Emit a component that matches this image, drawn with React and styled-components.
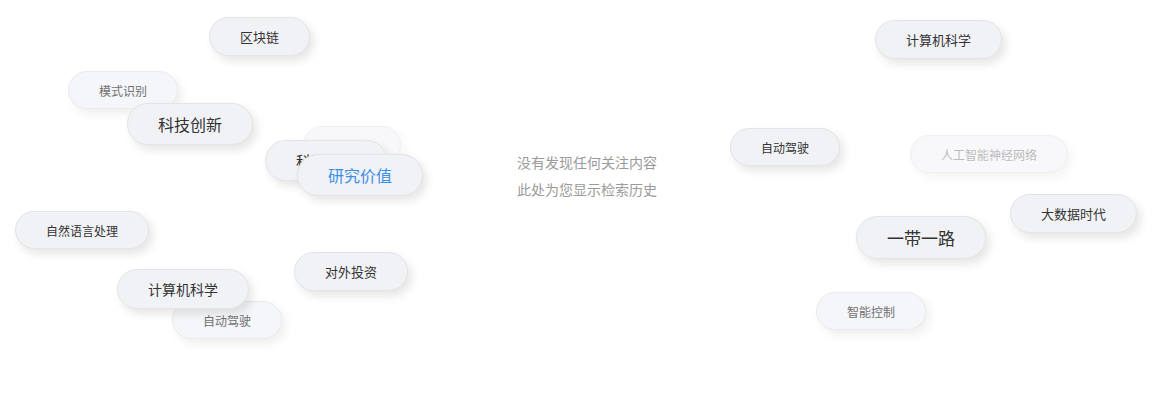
import React from "react";
import styled, { createGlobalStyle, css } from "styled-components";

const GlobalStyle = createGlobalStyle`
  html, body {
    margin: 0;
    padding: 0;
    background: #ffffff;
  }
  body {
    font-family: "Noto Sans CJK SC", "Microsoft YaHei", "Noto Sans", sans-serif;
  }
`;

const Canvas = styled.div`
  position: relative;
  width: 1173px;
  height: 395px;
  overflow: hidden;
  background: #ffffff;
  display: flex;
  justify-content: center;
  align-items: flex-start;
  padding-top: 149px;
  box-sizing: border-box;
`;

const Empty = styled.div`
  display: flex;
  flex-direction: column;
  align-items: flex-start;
  font-size: 14px;
  line-height: 27px;
  color: #9a9a9a;
  margin-left: 1px;
`;

const tones = {
  normal: css`
    background: #f1f2f6;
    color: #333333;
    border-color: #e3e4e8;
    box-shadow: 4px 5px 9px rgba(60, 50, 40, 0.12);
  `,
  accent: css`
    background: #f1f2f6;
    color: #3a8ee6;
    border-color: #e3e4e8;
    box-shadow: 4px 5px 9px rgba(60, 50, 40, 0.12);
  `,
  dim: css`
    background: #f5f6f9;
    color: #707070;
    border-color: #eaebee;
    box-shadow: 4px 5px 9px rgba(60, 50, 40, 0.08);
  `,
  faint: css`
    background: #f8f8fa;
    color: #bcbcbc;
    border-color: #f0f0f2;
    box-shadow: 4px 5px 9px rgba(60, 50, 40, 0.05);
  `,
};

const Pill = styled.div`
  position: absolute;
  left: ${(p) => p.$x}px;
  top: ${(p) => p.$y}px;
  height: ${(p) => p.$size + 26}px;
  padding: 0 30px;
  border: 1px solid;
  border-radius: 999px;
  display: flex;
  align-items: center;
  justify-content: center;
  font-size: ${(p) => p.$size}px;
  white-space: nowrap;
  box-sizing: border-box;
  ${(p) => tones[p.$tone]}
`;

const words = [
  { t: "区块链", x: 209, y: 17, s: 13, tone: "normal" },
  { t: "模式识别", x: 68, y: 71, s: 12, tone: "dim" },
  { t: "科技创新", x: 127, y: 103, s: 16, tone: "normal" },
  { t: "云计算", x: 303, y: 126, s: 12, tone: "faint" },
  { t: "科研成果", x: 265, y: 140, s: 15, tone: "normal" },
  { t: "研究价值", x: 297, y: 154, s: 16, tone: "accent" },
  { t: "自然语言处理", x: 15, y: 211, s: 12, tone: "normal" },
  { t: "对外投资", x: 294, y: 252, s: 13, tone: "normal" },
  { t: "自动驾驶", x: 172, y: 301, s: 12, tone: "dim" },
  { t: "计算机科学", x: 117, y: 269, s: 14, tone: "normal" },
  { t: "计算机科学", x: 875, y: 20, s: 13, tone: "normal" },
  { t: "自动驾驶", x: 730, y: 128, s: 12, tone: "normal" },
  { t: "人工智能神经网络", x: 910, y: 135, s: 12, tone: "faint" },
  { t: "大数据时代", x: 1010, y: 194, s: 13, tone: "normal" },
  { t: "一带一路", x: 856, y: 216, s: 17, tone: "normal" },
  { t: "智能控制", x: 816, y: 292, s: 12, tone: "dim" },
];

export default function App() {
  return (
    <>
      <GlobalStyle />
      <Canvas>
        <Empty>
          <span>没有发现任何关注内容</span>
          <span>此处为您显示检索历史</span>
        </Empty>
        {words.map((w, i) => (
          <Pill key={i} $x={w.x} $y={w.y} $size={w.s} $tone={w.tone}>
            {w.t}
          </Pill>
        ))}
      </Canvas>
    </>
  );
}
